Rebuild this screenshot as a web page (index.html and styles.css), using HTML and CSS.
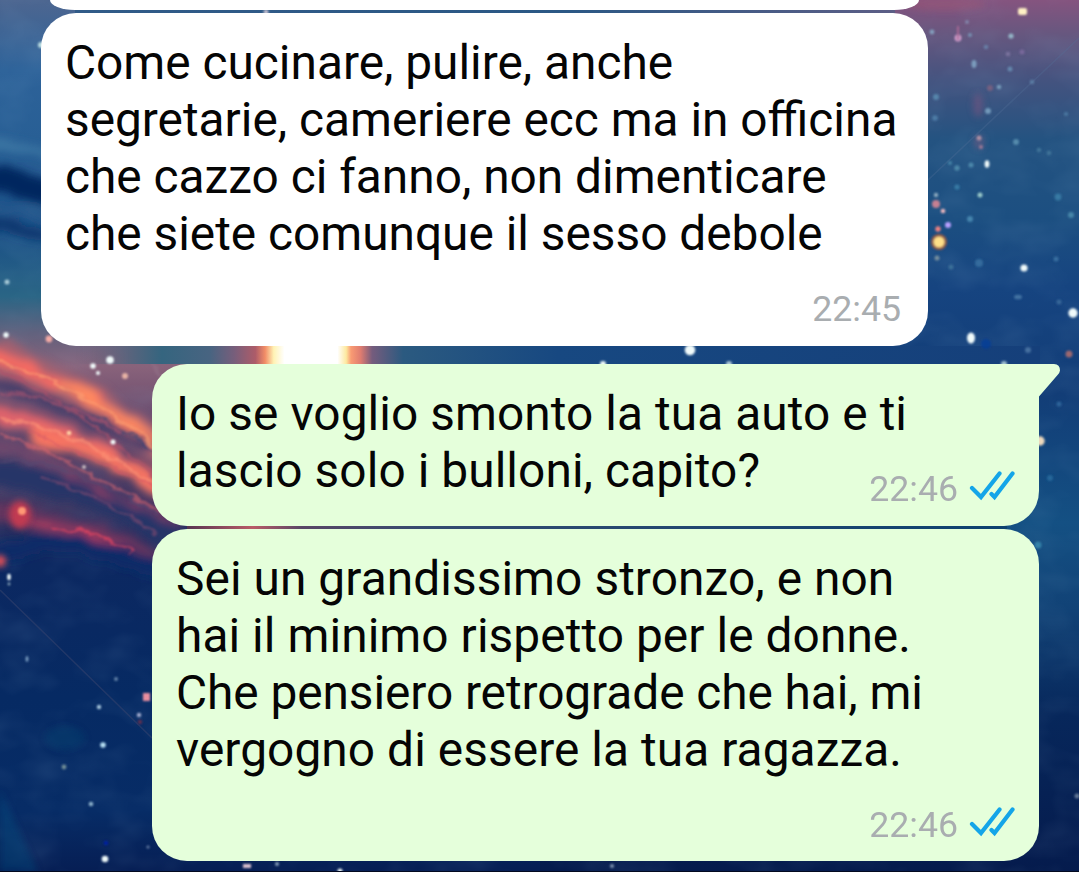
FILE: index.html
```
<!DOCTYPE html>
<html lang="it">
<head>
<meta charset="utf-8">
<title>Chat</title>
<link rel="stylesheet" href="styles.css">
</head>
<body>
<svg class="wallpaper" viewBox="0 0 1079 872" aria-hidden="true">
  <defs>
    <linearGradient id="left" x1="0" y1="0" x2="0" y2="1">
      <stop offset="0" stop-color="#4d6690"/><stop offset=".08" stop-color="#2d6299"/><stop offset=".16" stop-color="#285f95"/>
      <stop offset=".26" stop-color="#194e86"/><stop offset=".34" stop-color="#2a6585"/>
      <stop offset=".38" stop-color="#5f617d"/><stop offset=".42" stop-color="#89637b"/><stop offset=".48" stop-color="#67496c"/>
      <stop offset=".58" stop-color="#3c3560"/><stop offset=".645" stop-color="#0c2861"/>
      <stop offset=".8" stop-color="#062a63"/><stop offset=".93" stop-color="#072c66"/><stop offset="1" stop-color="#061e54"/>
    </linearGradient>
    <linearGradient id="right" x1="0" y1="0" x2="0" y2="1">
      <stop offset="0" stop-color="#85547f"/><stop offset=".04" stop-color="#66577f"/><stop offset=".09" stop-color="#45537f"/>
      <stop offset=".16" stop-color="#245381"/><stop offset=".25" stop-color="#1c4f81"/><stop offset=".33" stop-color="#164480"/>
      <stop offset=".45" stop-color="#123d77"/><stop offset=".6" stop-color="#145083"/><stop offset=".7" stop-color="#114276"/>
      <stop offset=".82" stop-color="#07275b"/><stop offset="1" stop-color="#051b4d"/>
    </linearGradient>
    <linearGradient id="band">
      <stop offset="0" stop-color="#75637b" stop-opacity="0"/><stop offset=".06" stop-color="#55647d"/><stop offset=".09" stop-color="#35657f"/><stop offset=".14" stop-color="#486481"/>
      <stop offset=".165" stop-color="#775e7b"/><stop offset=".187" stop-color="#ad5c69"/><stop offset=".197" stop-color="#f28d67"/><stop offset=".206" stop-color="#fff3b5"/><stop offset=".217" stop-color="#fff"/>
      <stop offset=".272" stop-color="#fff"/><stop offset=".281" stop-color="#fde9a0"/><stop offset=".286" stop-color="#f99b73"/><stop offset=".296" stop-color="#df7c70"/>
      <stop offset=".308" stop-color="#755c7d"/><stop offset=".34" stop-color="#2b5a80"/><stop offset=".5" stop-color="#174881"/><stop offset="1" stop-color="#153f7a"/>
    </linearGradient>
    <linearGradient id="seam">
      <stop offset="0" stop-color="#583552"/><stop offset=".08" stop-color="#b95b67"/><stop offset=".14" stop-color="#594666"/>
      <stop offset=".3" stop-color="#334b70"/><stop offset="1" stop-color="#0d4270"/>
    </linearGradient>
    <linearGradient id="topseam">
      <stop offset="0" stop-color="#315b88"/><stop offset=".6" stop-color="#2b5885"/><stop offset="1" stop-color="#5c5e86"/>
    </linearGradient>
    <filter id="soft" x="-20%" y="-40%" width="140%" height="180%">
      <feTurbulence type="fractalNoise" baseFrequency=".03 .06" numOctaves="3" seed="8"/>
      <feDisplacementMap in="SourceGraphic" scale="16" xChannelSelector="R" yChannelSelector="G"/>
      <feGaussianBlur stdDeviation="4"/>
    </filter>
    <filter id="wisps" x="-20%" y="-40%" width="140%" height="180%">
      <feTurbulence type="fractalNoise" baseFrequency=".04 .07" numOctaves="3" seed="5"/>
      <feDisplacementMap in="SourceGraphic" scale="14" xChannelSelector="R" yChannelSelector="G"/>
      <feGaussianBlur stdDeviation="1.3"/>
    </filter>
    <filter id="cloud" x="0" y="0" width="100%" height="100%">
      <feTurbulence type="fractalNoise" baseFrequency=".018 .028" numOctaves="3" seed="3"/>
      <feColorMatrix values="0 0 0 0 .3  0 0 0 0 .5  0 0 0 0 .7  1 0 0 0 -.4"/>
    </filter>
    <filter id="blur" x="-50%" y="-50%" width="200%" height="200%"><feGaussianBlur stdDeviation="3"/></filter>
    <filter id="star" x="-10%" y="-10%" width="120%" height="120%"><feGaussianBlur stdDeviation="1"/></filter>
  </defs>
  <rect width="540" height="872" fill="url(#left)"/>
  <rect x="540" width="539" height="872" fill="url(#right)"/>
  <rect width="1079" height="872" filter="url(#cloud)" opacity=".2"/>

  <g filter="url(#soft)" fill="none">
    <path d="M-20 145Q20 142 70 162" stroke="#4781ab" stroke-width="10" opacity=".7"/>
    <path d="M-20 178Q20 178 70 205" stroke="#04275f" stroke-width="26"/>
    <path d="M-20 205Q20 205 70 222" stroke="#2a5b8e" stroke-width="6"/>
    <path d="M-20 222Q20 225 70 250" stroke="#0b3770" stroke-width="14"/>
    <path d="M-20 352Q70 380 190 470" stroke="#a3606f" stroke-width="34"/>
    <path d="M-20 352Q70 375 190 468" stroke="#f66b62" stroke-width="13"/>
    <path d="M60 385Q110 408 190 462" stroke="#ff8960" stroke-width="10"/>
    <path d="M-20 380Q60 399 150 450" stroke="#483f6a" stroke-width="13"/>
    <path d="M-20 411Q60 418 180 500" stroke="#e0636c" stroke-width="18"/>
    <path d="M30 436Q90 440 180 500" stroke="#f77562" stroke-width="15"/>
    <path d="M-20 443Q60 460 180 530" stroke="#6e466c" stroke-width="13"/>
    <path d="M-20 474Q60 470 180 537" stroke="#273567" stroke-width="26"/>
    <path d="M70 476Q110 500 180 524" stroke="#913f65" stroke-width="4"/>
    <path d="M-20 510Q70 515 180 565" stroke="#65365f" stroke-width="14"/>
    <path d="M30 523Q80 530 145 559" stroke="#b93c5e" stroke-width="6"/>
    <path d="M-20 560Q70 520 190 585" stroke="#0c2c67" stroke-width="17"/>
  </g>
  <g filter="url(#wisps)" fill="none" stroke-width="2.5" opacity=".6">
    <path d="M0 362Q80 386 165 455" stroke="#ffa172"/>
    <path d="M0 370Q70 400 160 480" stroke="#b1516a"/>
    <path d="M60 404Q110 418 160 455" stroke="#354574"/>
    <path d="M0 393Q60 398 120 430" stroke="#aa5370"/>
    <path d="M0 420Q60 424 165 490" stroke="#ff9778"/>
    <path d="M30 430Q90 460 165 490" stroke="#d55a66"/>
    <path d="M0 434Q60 452 165 515" stroke="#d5656f"/>
    <path d="M0 460Q80 464 160 516" stroke="#574a72"/>
    <path d="M40 478Q90 490 160 535" stroke="#824a70"/>
    <path d="M50 530Q90 525 130 555" stroke="#f64760"/>
    <path d="M110 330Q140 350 165 380" stroke="#927187"/>
  </g>
  <g filter="url(#blur)">
    <ellipse cx="20" cy="515" rx="11" ry="14" fill="#c13a51"/>
    <ellipse cx="0" cy="561" rx="6" ry="6" fill="#e75156"/>
    <ellipse cx="978" cy="105" rx="5" ry="12" fill="#6c5580" opacity=".7"/>
    <ellipse cx="979" cy="142" rx="5" ry="7" fill="#765a82" opacity=".6"/>
    <ellipse cx="945" cy="4" rx="40" ry="7" fill="#995373" opacity=".5"/>
    <ellipse cx="65" cy="738" rx="20" ry="12" fill="#0b4775" opacity=".3"/>
    <path d="M0 790L38 872H0Z" fill="#0c487c" opacity=".4"/>
  </g>
  <path d="M0 590L152 738" stroke="#37446e" stroke-width="1.5" opacity=".55"/>
  <path d="M1079 38L928 180" stroke="#55719a" stroke-width="1.5" opacity=".3"/>

  <rect x="75" y="10" width="820" height="3" fill="url(#topseam)"/>
  <rect x="75" y="346" width="965" height="18" fill="url(#band)"/>
  <rect x="187" y="526" width="820" height="3" fill="url(#seam)"/>

  <g filter="url(#star)" fill="#f0fafa">
    <circle cx="6" cy="335" r="2.7"/><circle cx="49" cy="339" r="3.4" fill="#f4aaa6"/><circle cx="7" cy="282" r="2.5" fill="#a8cad7"/>
    <circle cx="110" cy="360" r="3.8"/><circle cx="93" cy="366" r="2.8"/><circle cx="98" cy="373" r="2"/><circle cx="125" cy="376" r="3" fill="#e7b3a5"/>
    <circle cx="113" cy="442" r="2.5"/><circle cx="69" cy="433" r="2.3" fill="#ffd3a4"/><circle cx="84" cy="467" r="2" fill="#cabbc1"/>
    <circle cx="22" cy="511" r="4" fill="#ff9875"/><ellipse cx="9" cy="577" rx="1.8" ry="3.2"/><circle cx="9" cy="584" r="1.4" fill="#8eaabd"/>
    <ellipse cx="27" cy="659" rx="1.4" ry="3" fill="#7fa1c4"/><circle cx="116" cy="679" r="1.9" fill="#6788ac"/>
    <rect x="143" y="693" width="7" height="8" fill="#e98e9f"/><circle cx="99" cy="707" r="2.2" fill="#a9c8de"/>
    <circle cx="139" cy="715" r="2.2" fill="#a6afd0"/><circle cx="140" cy="722" r="2.2" fill="#61304f"/>
    <circle cx="103" cy="745" r="2.8" fill="#b8e0f4"/><circle cx="64" cy="767" r="2.4" fill="#728d97"/><circle cx="91" cy="804" r="2.3" fill="#8eb2cb"/>
    <circle cx="105" cy="859" r="3.3"/><circle cx="148" cy="847" r="1.5" fill="#6c83a9"/><circle cx="106" cy="843" r="2.3" fill="#0624a0"/>
    <rect x="243" y="864" width="8" height="4" fill="#dbc1d0"/><circle cx="277" cy="864" r="2" fill="#8aa1bb"/><circle cx="340" cy="871" r="2.5"/>
    <circle cx="612" cy="866" r="2" fill="#8195b2"/><circle cx="41" cy="45" r="3" fill="#b9dde2"/>
    <circle cx="266" cy="12" r="2.5" fill="#c3bfd0"/>
    <circle cx="690" cy="350" r="5.3"/><circle cx="603" cy="364" r="3"/><circle cx="729" cy="364" r="3" fill="#abc6d6"/><circle cx="1004" cy="364" r="3" fill="#a0bfd1"/>
    <rect x="1018" y="8" width="9" height="7" rx="2" fill="#fff0c4"/><circle cx="958" cy="38" r="3.4" fill="#d39fcd"/><path d="M957 26h2v14h-2z" fill="#a86995"/>
    <circle cx="1011" cy="36" r="2.6" fill="#94b6c7"/><circle cx="932" cy="32" r="2.4" fill="#849fbd"/><circle cx="967" cy="22" r="2" fill="#8285aa"/>
    <circle cx="970" cy="35" r="2" fill="#7791b2"/><ellipse cx="974" cy="64" rx="2.5" ry="4" fill="#7c9dbd"/><circle cx="986" cy="47" r="2.3" fill="#697fa6"/>
    <circle cx="1010" cy="69" r="2.5" fill="#6688ad"/><circle cx="1022" cy="52" r="2.5" fill="#79699b"/><circle cx="1008" cy="54" r="2.3" fill="#7b739e"/>
    <circle cx="1032" cy="82" r="2.3" fill="#5b7ca3"/><circle cx="999" cy="87" r="2.3" fill="#789bba"/><circle cx="990" cy="88" r="3" fill="#756180"/>
    <circle cx="936" cy="97" r="3" fill="#5785ac"/><circle cx="935" cy="118" r="2.8" fill="#4d7ca6"/><circle cx="988" cy="111" r="3" fill="#739abb"/>
    <circle cx="979" cy="138" r="2.5" fill="#af90a3"/><circle cx="981" cy="147" r="2" fill="#a07997"/><circle cx="1016" cy="142" r="3" fill="#568bad"/>
    <circle cx="1066" cy="114" r="2" fill="#4e7aa2"/><circle cx="1039" cy="150" r="2.3" fill="#407499"/><circle cx="1049" cy="153" r="2.3" fill="#407499"/>
    <ellipse cx="987" cy="164" rx="2.4" ry="3.8"/><circle cx="971" cy="165" r="2.5" fill="#4d89ac"/><circle cx="957" cy="168" r="2.7" fill="#4e88a9"/>
    <circle cx="950" cy="163" r="2" fill="#4582a6"/><circle cx="957" cy="187" r="2.6" fill="#377aa5"/><circle cx="980" cy="195" r="2.5" fill="#9acaca"/>
    <circle cx="936" cy="195" r="2.2" fill="#8eabc0"/><circle cx="936" cy="204" r="4" fill="#c58092"/><circle cx="943" cy="211" r="2.3" fill="#f0b8bd"/>
    <circle cx="1058" cy="197" r="3.4" fill="#3979a3"/><circle cx="1071" cy="215" r="3" fill="#4686a9"/><circle cx="970" cy="219" r="3" fill="#4685ae"/>
    <circle cx="948" cy="225" r="3" fill="#b9a0ff"/><circle cx="938" cy="229" r="2.7" fill="#ee8180"/><circle cx="939" cy="242" r="8" fill="#b45f39" opacity=".8"/><circle cx="939" cy="242" r="5.5" fill="#ffdf88"/>
    <circle cx="937" cy="258" r="2.5" fill="#778e9d"/><circle cx="979" cy="263" r="4" fill="#346c9d"/><circle cx="951" cy="267" r="2.5" fill="#3c7199"/>
    <circle cx="1024" cy="268" r="3.6"/><circle cx="1056" cy="259" r="2.5" fill="#3a70a0"/><ellipse cx="1018" cy="297" rx="4" ry="2.3" fill="#4372a2"/>
    <circle cx="1073" cy="313" r="4.7"/><ellipse cx="971" cy="338" rx="4" ry="5.5"/><circle cx="1059" cy="302" r="2.5" fill="#396899"/>
    <circle cx="986" cy="344" r="5" fill="#063c9b" opacity=".7"/><circle cx="1069" cy="354" r="3.5" fill="#9b6770"/><circle cx="1028" cy="350" r="3" fill="#4670a0"/>
    <circle cx="1059" cy="404" r="2.5" fill="#2e659a"/><circle cx="1040" cy="441" r="4.7" fill="#edd9bd"/><circle cx="1050" cy="478" r="3" fill="#28679a"/><circle cx="1038" cy="545" r="3.5" fill="#3482a8"/><circle cx="1077" cy="796" r="2.5" fill="#657998"/>
  </g>
  <rect y="871" width="1079" height="1" fill="#030a20"/>
</svg>

<main class="chat">
  <div class="bubble incoming clipped"></div>
  <article class="bubble incoming tall">
    <p class="text">Come cucinare, pulire, anche<br>segretarie, cameriere ecc ma in officina<br>che cazzo ci fanno, non dimenticare<br>che siete comunque il sesso debole</p>
    <div class="meta"><time>22:45</time></div>
  </article>
  <article class="bubble outgoing first">
    <svg class="tail" viewBox="0 0 56 34" aria-hidden="true"><path d="M0 0H50Q56 .3 56 6.500Q55.700 8.500 54 10.500L35 32.500V34H0Z"/></svg>
    <p class="text">Io se voglio smonto la tua auto e ti<br>lascio solo i bulloni, capito?</p>
    <div class="meta"><time>22:46</time><svg class="checks" viewBox="0 0 46 32" aria-hidden="true"><path d="M3 18L12 27L30.500 3.500M22.500 24L25.500 27L43.500 3.500"/></svg></div>
  </article>
  <article class="bubble outgoing tall last">
    <p class="text">Sei un grandissimo stronzo, e non<br>hai il minimo rispetto per le donne.<br><span class="tight">Che pensiero retrograde che hai, mi</span><br>vergogno di essere la tua ragazza.</p>
    <div class="meta"><time>22:46</time><svg class="checks" viewBox="0 0 46 32" aria-hidden="true"><path d="M3 18L12 27L30.500 3.500M22.500 24L25.500 27L43.500 3.500"/></svg></div>
  </article>
</main>
</body>
</html>
```
FILE: styles.css
```
* { box-sizing: border-box; }

body {
  position: relative;
  margin: 0;
  height: 872px;
  overflow: hidden;
  background: #164b80;
  font-family: Roboto, "Liberation Sans", sans-serif;
}

.wallpaper {
  position: absolute;
  inset: 0;
  width: 1079px;
  height: 872px;
}

.chat {
  position: relative;
  display: flex;
  flex-direction: column;
  padding: 0 40px 0 41px;
}

.bubble {
  position: relative;
  width: 887px;
  padding: 22px 24px 0;
  border-radius: 35px;
}

.incoming { align-self: flex-start; background: #fff; }
.outgoing { align-self: flex-end; background: #e5ffdb; }

.clipped {
  width: 869px;
  height: 10px;
  margin: 0 0 3px 9px;
  padding: 0;
  border-radius: 0 0 25px 25px / 0 0 10px 10px;
}

.tall { height: 333px; }

.first {
  height: 162px;
  margin: 18px 0 3px;
  border-top-right-radius: 0;
}

.last { height: 332px; }

.text {
  margin: 0;
  color: #050505;
  font-size: 47.8px;
  line-height: 57px;
  white-space: nowrap;
}

.outgoing .text { letter-spacing: .08px; }
.outgoing .tight { letter-spacing: -.06px; }

.meta {
  position: absolute;
  right: 24px;
  bottom: 16px;
  display: flex;
  align-items: center;
  color: #a9adb0;
  font-size: 35.7px;
  line-height: 42px;
}

.incoming .meta { right: 27px; }
.last .meta { bottom: 15px; }

.checks {
  width: 46px;
  height: 32px;
  margin: -6px 0 0 11px;
  fill: none;
  stroke: #14a5e8;
  stroke-width: 4.2;
  stroke-linecap: round;
}

.tail {
  position: absolute;
  top: 0;
  right: -21px;
  width: 56px;
  height: 34px;
  fill: #e5ffdb;
}
```
